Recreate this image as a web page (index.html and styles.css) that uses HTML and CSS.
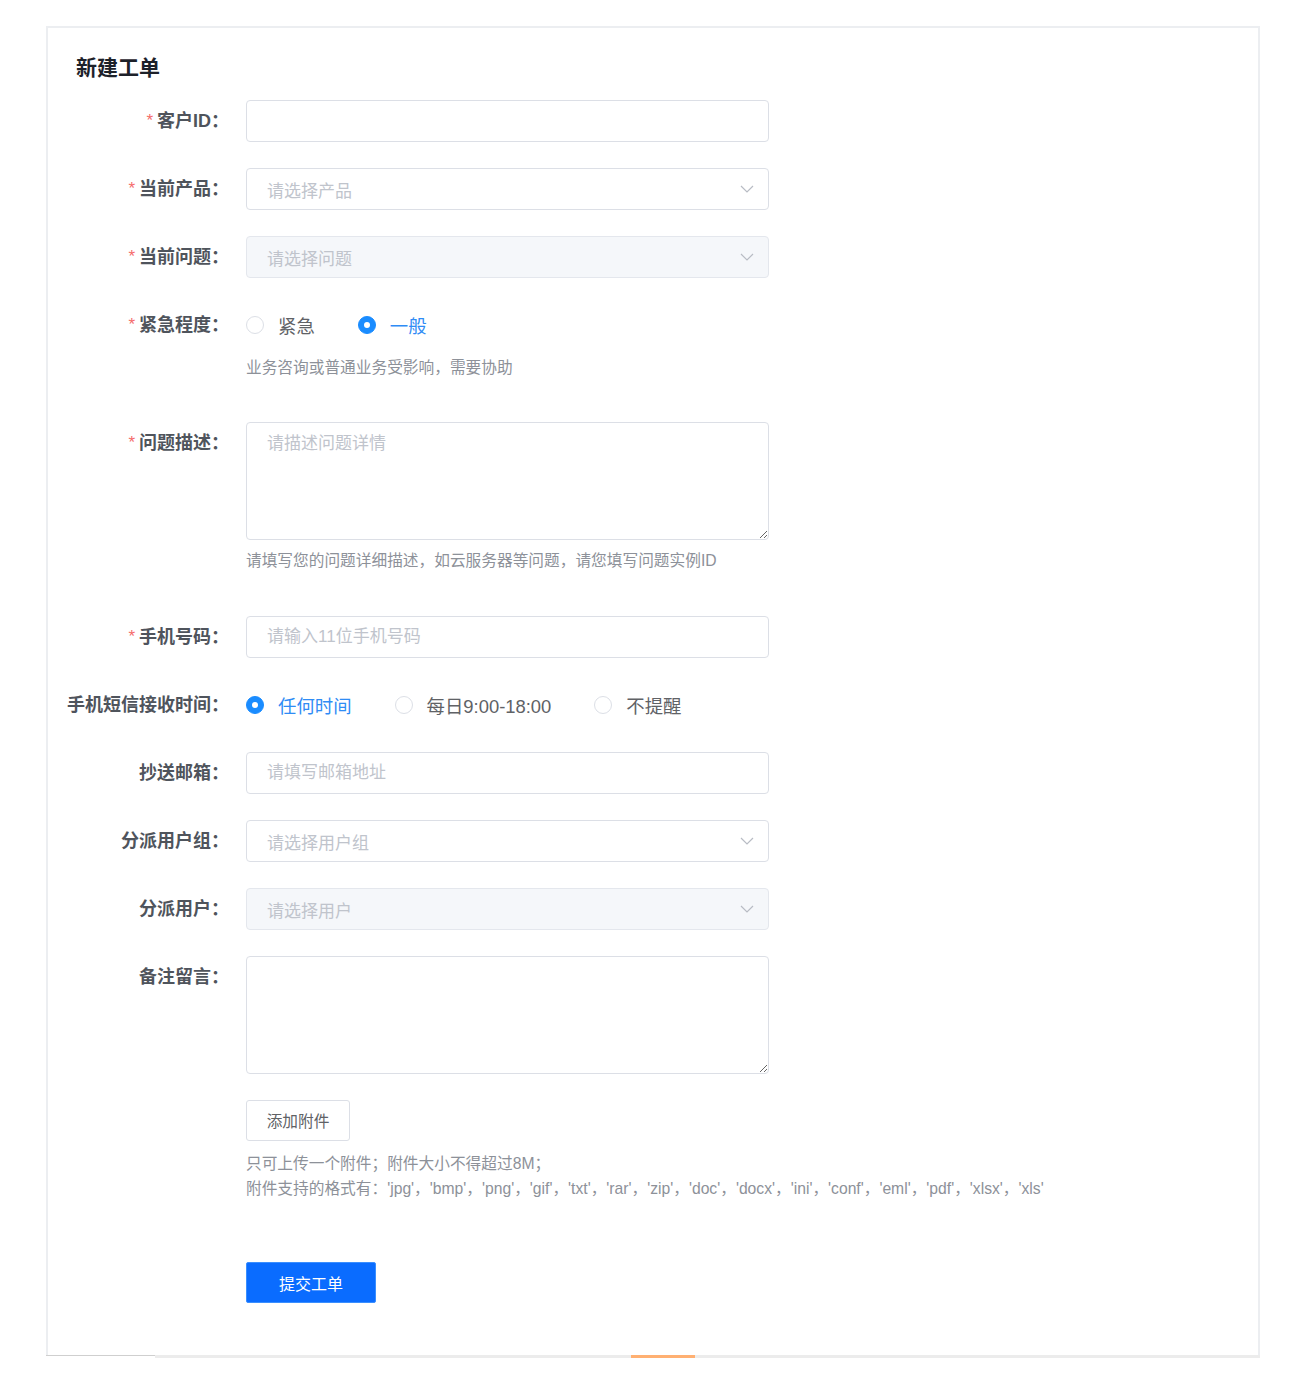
FILE: index.html
```html
<!DOCTYPE html>
<html lang="zh-CN">
<head>
<meta charset="utf-8">
<title>新建工单</title>
<link rel="stylesheet" href="styles.css">
</head>
<body>
<div class="card">
  <h1 class="title">新建工单</h1>
  <form class="form">
    <div class="item">
      <label class="label"><span class="req">*</span>客户ID：</label>
      <div class="control"><input class="input" type="text"></div>
    </div>
    <div class="item">
      <label class="label"><span class="req">*</span>当前产品：</label>
      <div class="control">
        <div class="select"><span class="ph">请选择产品</span>
          <svg class="chev" width="14" height="8" viewBox="0 0 14 8"><path d="M1 1l6 6 6-6" fill="none" stroke="#b8bcc4" stroke-width="1.2"/></svg>
        </div>
      </div>
    </div>
    <div class="item">
      <label class="label"><span class="req">*</span>当前问题：</label>
      <div class="control">
        <div class="select disabled"><span class="ph">请选择问题</span>
          <svg class="chev" width="14" height="8" viewBox="0 0 14 8"><path d="M1 1l6 6 6-6" fill="none" stroke="#b8bcc4" stroke-width="1.2"/></svg>
        </div>
      </div>
    </div>
    <div class="item">
      <label class="label"><span class="req">*</span>紧急程度：</label>
      <div class="control">
        <div class="radios">
          <span class="radio"><span class="dot"></span>紧急</span>
          <span class="radio on"><span class="dot"></span>一般</span>
        </div>
        <div class="help">业务咨询或普通业务受影响，需要协助</div>
      </div>
    </div>
    <div class="item">
      <label class="label"><span class="req">*</span>问题描述：</label>
      <div class="control">
        <textarea class="textarea" placeholder="请描述问题详情"></textarea>
        <div class="help help2">请填写您的问题详细描述，如云服务器等问题，请您填写问题实例ID</div>
      </div>
    </div>
    <div class="item">
      <label class="label"><span class="req">*</span>手机号码：</label>
      <div class="control"><input class="input" type="text" placeholder="请输入11位手机号码"></div>
    </div>
    <div class="item">
      <label class="label">手机短信接收时间：</label>
      <div class="control">
        <div class="radios">
          <span class="radio on"><span class="dot"></span>任何时间</span>
          <span class="radio"><span class="dot"></span>每日9:00-18:00</span>
          <span class="radio"><span class="dot"></span>不提醒</span>
        </div>
      </div>
    </div>
    <div class="item">
      <label class="label">抄送邮箱：</label>
      <div class="control"><input class="input" type="text" placeholder="请填写邮箱地址"></div>
    </div>
    <div class="item">
      <label class="label">分派用户组：</label>
      <div class="control">
        <div class="select"><span class="ph">请选择用户组</span>
          <svg class="chev" width="14" height="8" viewBox="0 0 14 8"><path d="M1 1l6 6 6-6" fill="none" stroke="#b8bcc4" stroke-width="1.2"/></svg>
        </div>
      </div>
    </div>
    <div class="item">
      <label class="label">分派用户：</label>
      <div class="control">
        <div class="select disabled"><span class="ph">请选择用户</span>
          <svg class="chev" width="14" height="8" viewBox="0 0 14 8"><path d="M1 1l6 6 6-6" fill="none" stroke="#b8bcc4" stroke-width="1.2"/></svg>
        </div>
      </div>
    </div>
    <div class="item">
      <label class="label">备注留言：</label>
      <div class="control"><textarea class="textarea"></textarea></div>
    </div>
    <div class="item">
      <div class="label"></div>
      <div class="control wide">
        <button type="button" class="btn">添加附件</button>
        <div class="attach-help">
          <div>只可上传一个附件；附件大小不得超过8M；</div>
          <div>附件支持的格式有：'jpg'，'bmp'，'png'，'gif'，'txt'，'rar'，'zip'，'doc'，'docx'，'ini'，'conf'，'eml'，'pdf'，'xlsx'，'xls'</div>
        </div>
      </div>
    </div>
    <div class="item submit-row">
      <div class="label"></div>
      <div class="control"><button type="button" class="btn-primary">提交工单</button></div>
    </div>
  </form>
</div>
<div class="scrollbar">
  <span class="seg-a"></span><span class="seg-b"></span><span class="seg-thumb"></span><span class="seg-c"></span>
</div>
</body>
</html>
```

FILE: styles.css
```css
* { box-sizing: border-box; }
html, body { margin: 0; padding: 0; background: #fff; }
body {
  font-family: "Liberation Sans", "Noto Sans CJK SC", sans-serif;
  color: #4a4f57;
}
.card {
  margin: 26px 0 0 46px;
  width: 1214px;
  border: 2px solid #eceef1;
  border-bottom: none;
  padding: 24px 0 52px 0;
}
.title {
  margin: 0 0 16px 28px;
  font-size: 21px;
  line-height: 32px;
  font-weight: bold;
  color: #1d2129;
}
.form { margin: 0; }
.item {
  display: flex;
  align-items: flex-start;
  margin-bottom: 26px;
}
.label {
  width: 181px;
  flex: none;
  text-align: right;
  font-size: 18px;
  line-height: 42px;
  font-weight: bold;
  color: #4f545c;
  white-space: nowrap;
}
.req {
  color: #f56c6c;
  font-size: 17px;
  font-weight: normal;
  margin-right: 4px;
  vertical-align: 1px;
}
.control {
  margin-left: 17px;
  width: 523px;
  flex: none;
}
.control.wide { width: 900px; }
.input, .select, .textarea {
  display: block;
  width: 523px;
  height: 42px;
  border: 1px solid #dcdfe6;
  border-radius: 4px;
  background: #fff;
  padding: 0 20px;
  font-family: inherit;
  font-size: 17px;
  color: #606266;
  outline: none;
}
.input::placeholder, .textarea::placeholder { color: #c0c4cc; }
.select {
  display: flex;
  align-items: center;
  justify-content: space-between;
  padding-right: 14px;
}
.select.disabled { background: #f5f7fa; border-color: #e4e7ed; }
.ph { color: #c0c4cc; }
.chev { display: block; }
.textarea {
  height: 118px;
  padding: 9px 20px;
  line-height: 24px;
  resize: vertical;
}
.radios {
  display: flex;
  align-items: center;
  height: 42px;
}
.radio {
  display: inline-flex;
  align-items: center;
  font-size: 18.4px;
  color: #606266;
  margin-right: 43px;
}
.dot {
  width: 18px;
  height: 18px;
  border: 1px solid #dcdfe6;
  border-radius: 50%;
  background: #fff;
  margin-right: 14px;
  position: relative;
}
.radio.on { color: #2f8cf5; }
.radio.on .dot {
  background: #1a8cff;
  border-color: #1a8cff;
}
.radio.on .dot::after {
  content: "";
  position: absolute;
  width: 6px;
  height: 6px;
  border-radius: 50%;
  background: #fff;
  left: 5px;
  top: 5px;
}
.help {
  margin: 11px 0 17px;
  font-size: 15.7px;
  line-height: 22px;
  color: #8d9199;
  white-space: nowrap;
}
.help2 { margin-top: 10px; margin-bottom: 18px; }
.btn {
  display: block;
  width: 104px;
  height: 41px;
  border: 1px solid #dcdfe6;
  border-radius: 3px;
  background: #fff;
  font-family: inherit;
  font-size: 15.7px;
  color: #606266;
  padding: 0;
}
.attach-help {
  margin-top: 10px;
  font-size: 15.7px;
  line-height: 25px;
  color: #8d9199;
  white-space: nowrap;
}
.item.submit-row { margin-top: 61px; margin-bottom: 0; }
.btn-primary {
  display: block;
  width: 130px;
  height: 41px;
  border: 1px solid #3a8fff;
  border-radius: 2px;
  background: #0a6cff;
  color: #fff;
  font-family: inherit;
  font-size: 16px;
  padding: 0;
}
.scrollbar {
  margin-left: 46px;
  width: 1214px;
  height: 3px;
  display: flex;
}
.seg-a { width: 109px; border-top: 1px solid #cfcfcf; }
.seg-b { width: 476px; background: #ececec; }
.seg-thumb { width: 64px; background: #ffb072; }
.seg-c { flex: 1; background: #ececec; }
```
